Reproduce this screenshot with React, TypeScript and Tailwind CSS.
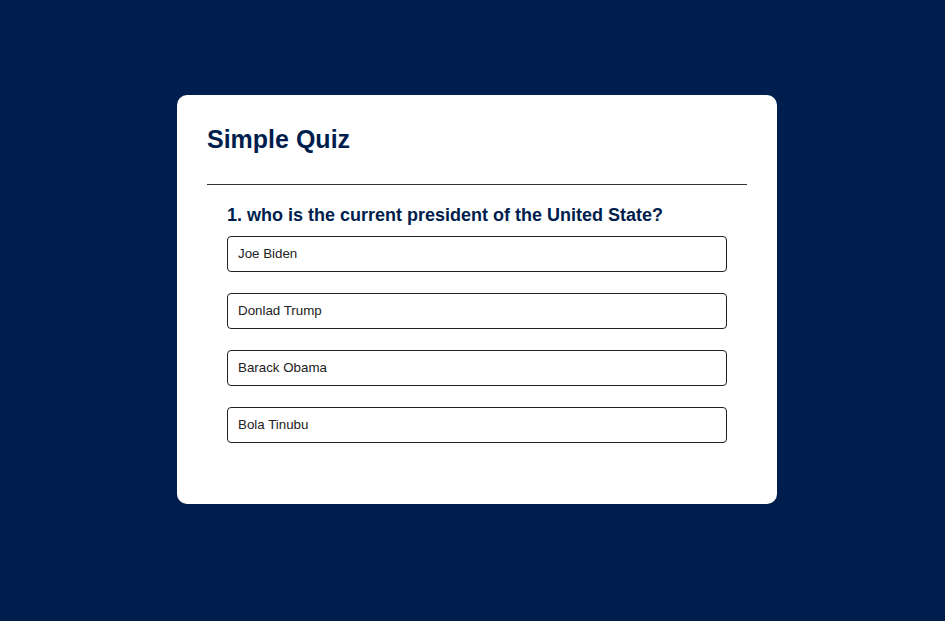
import React from 'react';

export default function App() {
  const answers = ['Joe Biden', 'Donlad Trump', 'Barack Obama', 'Bola Tinubu'];

  return (
    <div className="min-h-screen w-full bg-[#001e4d] pt-[95px] pl-[9px] flex justify-center items-start font-['Liberation_Sans',Arial,sans-serif]">
      <div className="w-[600px] bg-white rounded-[10px] p-[30px] pb-[61px]">
        <h1 className="text-[25px] leading-[29px] font-bold text-[#001e4d]">Simple Quiz</h1>
        <hr className="mt-[30px] border-0 border-t border-[#333]" />
        <div className="px-[20px] pt-[20px]">
          <h2 className="text-[18px] leading-[21px] font-bold text-[#001e4d]">
            1. who is the current president of the United State?
          </h2>
          <div className="mt-[10px] flex flex-col gap-[21px]">
            {answers.map((a) => (
              <button
                key={a}
                className="h-[36px] w-full text-left px-[10px] border border-[#222] rounded-[4px] bg-white text-[13.333px] text-[#222]"
              >
                {a}
              </button>
            ))}
          </div>
        </div>
      </div>
    </div>
  );
}
